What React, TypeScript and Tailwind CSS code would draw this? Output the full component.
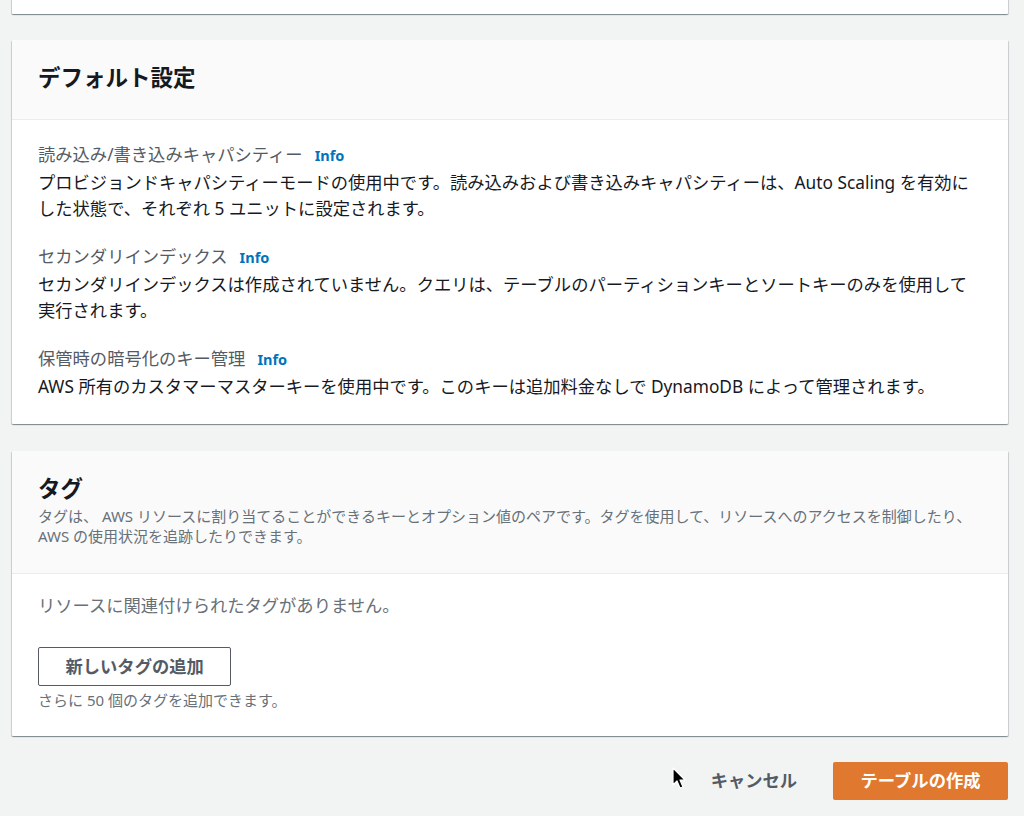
import React from "react";

const font = { fontFamily: '"Noto Sans", "Noto Sans CJK JP", sans-serif' };

function Info() {
  return <span className="ml-[12px] text-[14.5px] font-bold text-[#0073bb]">Info</span>;
}

function Card({ children }: { children: React.ReactNode }) {
  return (
    <div className="bg-white rounded-[1px] shadow-[0_1px_1px_0_rgba(0,28,36,0.3),1px_1px_1px_0_rgba(0,28,36,0.15),-1px_1px_1px_0_rgba(0,28,36,0.15)]">
      {children}
    </div>
  );
}

export default function App() {
  return (
    <div className="w-[1024px] h-[816px] overflow-hidden bg-[#f2f3f3] text-[#16191f] relative" style={font}>
      <div className="ml-[12px] mr-[16px] flex flex-col">
        <div className="mt-[-20px]">
          <Card>
            <div className="h-[34px]" />
          </Card>
        </div>

        <div className="mt-[26px]">
          <Card>
            <div className="bg-[#fafafa] border-b border-[#eaeded] px-[26px] pt-[23px] pb-[27px]">
              <h2 className="text-[22.5px] font-bold leading-[29px]">デフォルト設定</h2>
            </div>
            <div className="px-[26px] pt-[22px] pb-[24px] flex flex-col gap-[22px] text-[17.3px] leading-[26px]">
              <div>
                <div className="text-[#545b64] mb-[2px]">読み込み/書き込みキャパシティー<Info /></div>
                <div>プロビジョンドキャパシティーモードの使用中です。読み込みおよび書き込みキャパシティーは、Auto Scaling を有効にした状態で、それぞれ 5 ユニットに設定されます。</div>
              </div>
              <div>
                <div className="text-[#545b64] mb-[2px]">セカンダリインデックス<Info /></div>
                <div>セカンダリインデックスは作成されていません。クエリは、テーブルのパーティションキーとソートキーのみを使用して実行されます。</div>
              </div>
              <div>
                <div className="text-[#545b64] mb-[2px]">保管時の暗号化のキー管理<Info /></div>
                <div>AWS 所有のカスタマーマスターキーを使用中です。このキーは追加料金なしで DynamoDB によって管理されます。</div>
              </div>
            </div>
          </Card>
        </div>

        <div className="mt-[27px]">
          <Card>
            <div className="bg-[#fafafa] border-b border-[#eaeded] px-[26px] pt-[23px] pb-[27px]">
              <h2 className="text-[22.5px] font-bold leading-[29px]">タグ</h2>
              <p className="mt-[3px] text-[15px] leading-[20px] text-[#687078]">
                タグは、 AWS リソースに割り当てることができるキーとオプション値のペアです。タグを使用して、リソースへのアクセスを制御したり、AWS の使用状況を追跡したりできます。
              </p>
            </div>
            <div className="px-[26px] pt-[19px] pb-[26px]">
              <div className="text-[17.3px] leading-[26px] text-[#687078]">リソースに関連付けられたタグがありません。</div>
              <button className="mt-[28px] border border-[#545b64] rounded-[2px] px-[26.5px] h-[39px] text-[17.3px] font-bold text-[#545b64] bg-white leading-none">
                新しいタグの追加
              </button>
              <div className="mt-[4px] text-[15px] leading-[20px] text-[#687078]">さらに 50 個のタグを追加できます。</div>
            </div>
          </Card>
        </div>

        <div className="mt-[26px] flex justify-end items-center gap-[16px]">
          <button className="px-[20px] h-[38px] text-[17.3px] font-bold text-[#545b64] leading-none">キャンセル</button>
          <button className="px-[27.5px] h-[38px] rounded-[2px] bg-[#e1782f] text-white text-[17.3px] font-bold leading-none">
            テーブルの作成
          </button>
        </div>
      </div>

      <svg className="absolute left-[672px] top-[767px]" width="16" height="24" viewBox="0 0 16 24">
        <path d="M1 1 L1 18 L5 14 L8 21 L11 20 L8 13 L13 13 Z" fill="#000" stroke="#fff" strokeWidth="1.2" strokeLinejoin="round" />
      </svg>
    </div>
  );
}
